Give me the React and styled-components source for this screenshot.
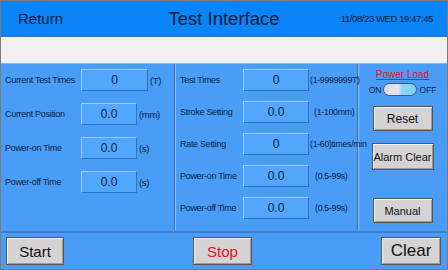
import React from "react";
import styled, { createGlobalStyle } from "styled-components";

const Global = createGlobalStyle`
  html, body { margin: 0; padding: 0; background: #f0f0f0; }
  body { font-family: "Liberation Sans", Arial, sans-serif; }
`;

const Screen = styled.div`
  width: 448px;
  height: 270px;
  display: flex;
  flex-direction: column;
  background: #4a9df6;
  border: 1px solid #7a7a7a;
  box-sizing: border-box;
  overflow: hidden;
`;

const Header = styled.div`
  height: 35px;
  background: #0a84f6;
  display: grid;
  grid-template-columns: 1fr auto 1fr;
  align-items: center;
  color: #0b1c3f;
  border-bottom: 1px solid #3d6fa8;
`;

const Return = styled.div`
  font-size: 15px;
  padding-left: 17px;
`;

const Title = styled.div`
  font-size: 18.5px;
  padding-top: 1px;
`;

const Clock = styled.div`
  font-size: 9.5px;
  justify-self: end;
  padding-right: 14px;
  letter-spacing: -0.4px;
`;

const Strip = styled.div`
  height: 26px;
  background: #f0f0f0;
  border-bottom: 1px solid #8fb8e6;
`;

const Body = styled.div`
  flex: 1;
  display: grid;
  grid-template-columns: 174px 183px 1fr;
  border-bottom: 2px solid #3c7fc9;
`;

const Panel = styled.div`
  border-right: ${(p) => (p.$last ? "none" : "1px solid #2f6fb8")};
  box-shadow: ${(p) => (p.$last ? "none" : "1px 0 0 #8cc2ff")};
  padding: ${(p) => p.$pad};
  display: flex;
  flex-direction: column;
  gap: ${(p) => p.$gap};
`;

const Row = styled.div`
  display: grid;
  grid-template-columns: ${(p) => p.$cols};
  align-items: center;
  height: 22px;
`;

const Label = styled.div`
  font-size: 9px;
  color: #0b1c3f;
  letter-spacing: -0.3px;
  white-space: nowrap;
`;

const Field = styled.div`
  width: ${(p) => p.$w}px;
  height: 22px;
  box-sizing: border-box;
  background: #52a6fb;
  border: 1px solid #2f74c4;
  border-top-color: #9ccbff;
  border-left-color: #9ccbff;
  display: flex;
  align-items: center;
  justify-content: center;
  font-size: 12px;
  color: #0b1c3f;
`;

const Unit = styled.div`
  font-size: ${(p) => p.$fs}px;
  color: #0b1c3f;
  padding-left: ${(p) => p.$pl || 2}px;
  letter-spacing: -0.3px;
  white-space: nowrap;
`;

const Side = styled.div`
  display: flex;
  flex-direction: column;
  align-items: center;
  padding-top: 5px;
`;

const LoadLink = styled.div`
  font-size: 10px;
  color: #e0102a;
  text-decoration: underline;
`;

const SwitchRow = styled.div`
  display: flex;
  align-items: center;
  gap: 2px;
  font-size: 8.5px;
  color: #0b1c3f;
  margin-top: 3px;
`;

const Toggle = styled.div`
  width: 34px;
  height: 13px;
  border-radius: 7px;
  background: linear-gradient(90deg, #ddd8e6 0%, #e6e3ec 45%, #8fd6f7 55%, #7fd0f5 100%);
  border: 1px solid #3a5a86;
  box-sizing: border-box;
`;

const Button = styled.button`
  width: ${(p) => p.$w}px;
  height: ${(p) => p.$h}px;
  background: #d4d2d2;
  border: 1px solid #555;
  box-shadow: inset 1px 1px 0 #f4f4f4, inset -1px -1px 0 #9a9a9a;
  font-family: "Liberation Sans", Arial, sans-serif;
  font-size: ${(p) => p.$fs}px;
  color: ${(p) => p.$color || "#111"};
  padding: 0;
  margin-top: ${(p) => p.$mt || 0}px;
`;

const Footer = styled.div`
  height: 36px;
  display: flex;
  align-items: center;
  padding: 0 6px 0 5px;
  justify-content: space-between;
`;

const leftRows = [
  ["Current Test Times", "0", "(T)", 67],
  ["Current Position", "0.0", "(mm)", 56],
  ["Power-on Time", "0.0", "(s)", 56],
  ["Power-off Time", "0.0", "(s)", 56],
];

const midRows = [
  ["Test Times", "0", "(1-9999999T)", 1],
  ["Stroke Setting", "0.0", "(1-100mm)", 5],
  ["Rate Setting", "0", "(1-60)times/min", 1],
  ["Power-on Time", "0.0", "(0.5-99s)", 6],
  ["Power-off Time", "0.0", "(0.5-99s)", 6],
];

export default function App() {
  return (
    <>
      <Global />
      <Screen>
        <Header>
          <Return>Return</Return>
          <Title>Test Interface</Title>
          <Clock>11/08/23 WED 19:47:45</Clock>
        </Header>
        <Strip />
        <Body>
          <Panel $pad="5px 0 0 4px" $gap="12px">
            {leftRows.map(([l, v, u, w]) => (
              <Row key={l} $cols="76px auto 1fr">
                <Label>{l}</Label>
                <Field $w={w}>{v}</Field>
                <Unit $fs={9.5}>{u}</Unit>
              </Row>
            ))}
          </Panel>
          <Panel $pad="5px 0 0 5px" $gap="10px">
            {midRows.map(([l, v, u, pl]) => (
              <Row key={l} $cols="63px auto 1fr">
                <Label>{l}</Label>
                <Field $w={66}>{v}</Field>
                <Unit $fs={8.8} $pl={pl}>{u}</Unit>
              </Row>
            ))}
          </Panel>
          <Panel $last>
            <Side>
              <LoadLink>Power Load</LoadLink>
              <SwitchRow>
                ON <Toggle /> OFF
              </SwitchRow>
              <Button $w={60} $h={25} $fs={12} $mt={10}>Reset</Button>
              <Button $w={62} $h={27} $fs={11} $mt={12}>Alarm Clear</Button>
              <Button $w={60} $h={25} $fs={11} $mt={28}>Manual</Button>
            </Side>
          </Panel>
        </Body>
        <Footer>
          <Button $w={58} $h={28} $fs={15}>Start</Button>
          <Button $w={59} $h={28} $fs={15} $color="#e8101e">Stop</Button>
          <Button $w={60} $h={28} $fs={17}>Clear</Button>
        </Footer>
      </Screen>
    </>
  );
}
